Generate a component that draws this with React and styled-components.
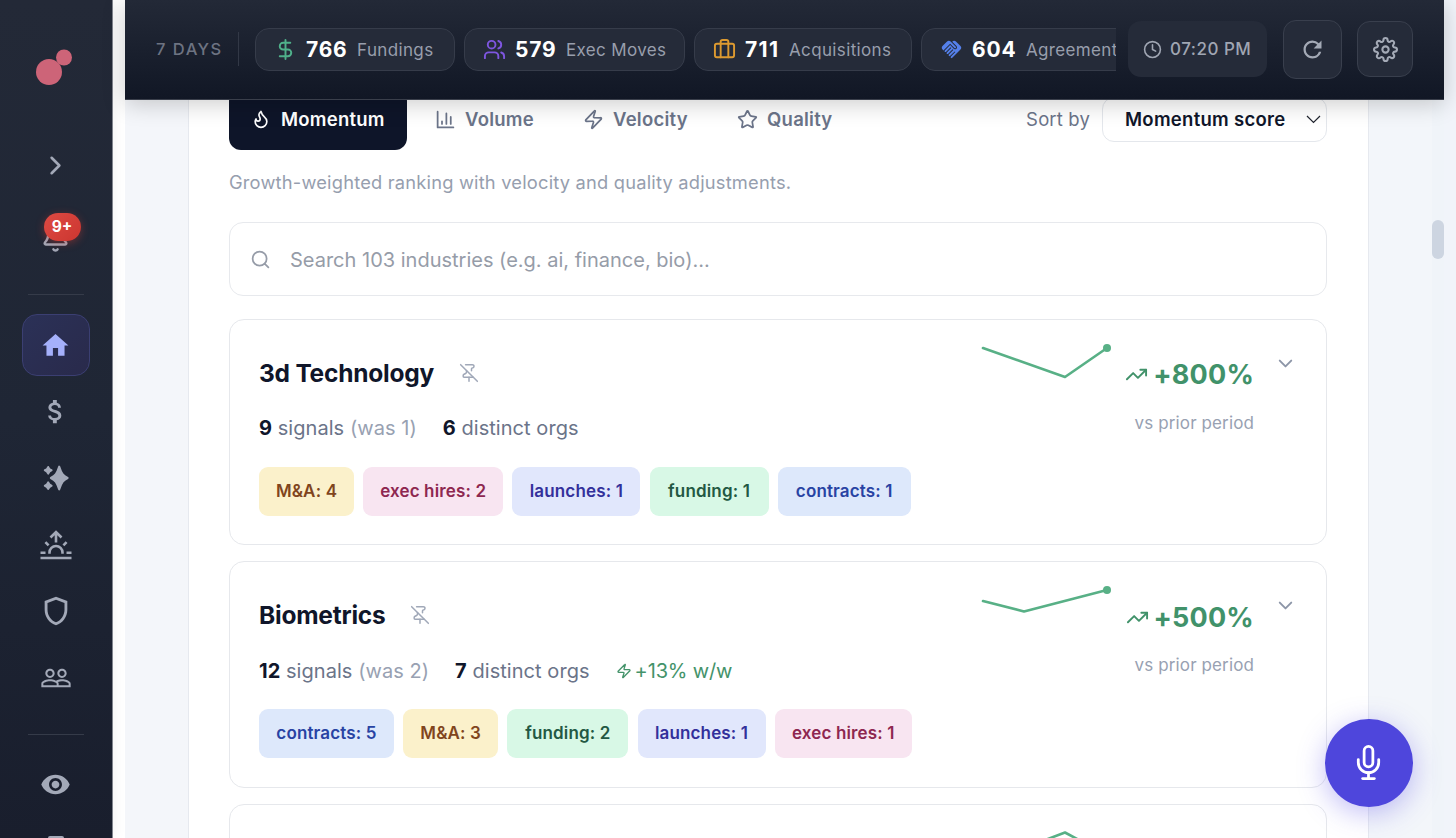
import React from 'react';
import styled, { createGlobalStyle } from 'styled-components';
import { Bell, ChevronDown, Clock, DollarSign, Users, Briefcase, Flame, Zap, Star, Search, PinOff, TrendingUp } from 'lucide-react';
import { FiChevronRight, FiMic, FiSettings } from 'react-icons/fi';
import { MdHome, MdAttachMoney, MdOutlineShield, MdPeopleOutline, MdRemoveRedEye, MdHandshake, MdRefresh } from 'react-icons/md';


const GlobalStyle = createGlobalStyle`
* {
    box-sizing: border-box;
}
body {
    margin: 0;
    overflow: hidden;
    background: white;
    font-family: Inter, "Liberation Sans", sans-serif;
    font-optical-sizing: none;
}
`;
const Container = styled.div`
width: 1456px;
height: 838px;
display: flex;
overflow: hidden;
background: white;
`;

/* sidebar */
const Sidebar = styled.nav`
width: 113px;
height: 838px;
flex: none;
display: flex;
flex-direction: column;
align-items: center;
padding-right: 1px;
overflow: hidden;
color: #a3a9b8;
background: linear-gradient(180deg, #232937 0%, #1f2635 50%, #191e2d 100%);
border-right: 1px solid #80848d;
box-shadow: 2px 0 12px rgba(0, 0, 0, 0.05);
`;
const Logo = styled.div`
height: 132px;
flex: none;
padding-top: 48px;
`;
const NavItem = styled.div`
position: relative;
width: 68px;
height: ${(p) => p.$height || 66.7}px;
flex: none;
display: flex;
align-items: center;
justify-content: center;
`;
const NavActive = styled(NavItem)`
height: 62px;
margin-bottom: 2px;
border-radius: 15px;
border: 1px solid #3b3f72;
color: #a5b0fb;
background: linear-gradient(135deg, #2b3157, #292a4b);
`;
const NavDivider = styled.div`
width: 56px;
height: 1px;
flex: none;
margin: ${(p) => p.$margin};
background: #353b49;
`;
const Badge = styled.span`
position: absolute;
left: 22px;
top: 14.5px;
width: 37px;
height: 28px;
border-radius: 14px;
display: flex;
align-items: center;
justify-content: center;
font-size: 15.5px;
font-weight: 700;
color: white;
background: linear-gradient(135deg, #df4a43, #cb3630);
box-shadow: 0 2px 9px rgba(220, 60, 50, 0.4);
`;

/* header */
const Main = styled.main`
width: 1319px;
height: 838px;
margin-left: 12px;
flex: none;
display: flex;
flex-direction: column;
`;
const Header = styled.header`
position: relative;
z-index: 2;
height: 100px;
flex: none;
display: flex;
align-items: center;
padding: 0 31px 1px;
background: linear-gradient(180deg, #232937, #111725);
border-bottom: 1px solid #3a3f4b;
box-shadow: 0 4px 22px rgba(0, 0, 0, 0.2);
`;
const Period = styled.span`
width: 83px;
height: 34px;
line-height: 34px;
flex: none;
font-size: 16.5px;
font-weight: 500;
letter-spacing: 1.5px;
color: #6d7382;
border-right: 1px solid #323846;
`;
const Stats = styled.div`
width: 876.5px;
flex: none;
display: flex;
gap: 9.5px;
margin: 0 12.5px 0 0;
padding-left: 16px;
overflow: hidden;
`;
const Stat = styled.div`
width: ${(p) => p.$width}px;
height: 43px;
flex: none;
display: flex;
align-items: center;
padding-left: 18px;
border: 1px solid #363c4a;
border-radius: 14px;
background: #252b39;
white-space: nowrap;
svg {
    color: ${(p) => p.$color};
    flex: none;
}
`;
const StatValue = styled.b`
margin-left: 9px;
font-size: 21px;
font-weight: 700;
letter-spacing: ${(p) => p.$spacing || 0.8}px;
color: white;
`;
const StatLabel = styled.span`
margin-left: 9.5px;
padding-top: 1px;
font-size: 17px;
letter-spacing: 0.36px;
color: #989eac;
`;
const Time = styled.div`
width: 139px;
height: 56px;
flex: none;
display: flex;
align-items: center;
gap: 8px;
padding-left: 15px;
border-radius: 13px;
font-size: 17px;
font-weight: 500;
letter-spacing: 0.5px;
white-space: nowrap;
color: #a0a6b3;
background: #252b39;
`;
const IconButton = styled.button`
width: ${(p) => p.$size}px;
height: ${(p) => p.$size}px;
flex: none;
display: flex;
align-items: center;
justify-content: center;
margin-left: 15.5px;
padding: 0;
border: 1px solid #393f4d;
border-radius: 13px;
color: #a4aab6;
background: #252b39;
`;

/* content */
const Content = styled.div`
display: flex;
height: 738px;
background: linear-gradient(90deg, #f4f6fa, #f3f6fa);
`;
const Panel = styled.section`
width: 1180.5px;
height: 738px;
flex: none;
margin-left: 63px;
padding: 0 40.5px 0 40px;
overflow: visible;
background: white;
border: 1px solid #e6e9ef;
border-width: 0 1px;
`;
const Toolbar = styled.div`
display: flex;
align-items: center;
height: 61px;
margin-top: -11px;
`;
const Tab = styled.div`
width: ${(p) => p.$width}px;
height: 61px;
flex: none;
display: flex;
align-items: center;
gap: ${(p) => (p.$active ? 10 : 9)}px;
padding-left: ${(p) => (p.$active ? 22 : 28)}px;
padding-bottom: 1px;
border-radius: 12px;
font-size: 18.5px;
font-weight: 600;
letter-spacing: 0.25px;
color: ${(p) => (p.$active ? 'white' : '#6b7489')};
background: ${(p) => (p.$active ? '#0e1529' : 'transparent')};
`;
const SortLabel = styled.span`
margin-left: auto;
margin-right: 12px;
padding-bottom: 1px;
font-size: 18.5px;
letter-spacing: 0.15px;
color: #6b7489;
`;
const Select = styled.div`
width: 225px;
height: 45px;
display: flex;
align-items: center;
justify-content: space-between;
padding: 0 5px 1px 22px;
border: 1px solid #e4e7ec;
border-radius: 12px;
font-size: 18.5px;
font-weight: 600;
letter-spacing: 0.28px;
color: #10162a;
`;
const Hint = styled.p`
margin: 20px 0 0;
line-height: 24px;
font-size: 18.3px;
letter-spacing: 0.2px;
color: #969eae;
`;
const SearchBox = styled.div`
height: 74px;
margin: 28px 0 22.5px;
display: flex;
align-items: center;
gap: 19px;
padding: 1px 0 0 20px;
border: 1px solid #e7e9ed;
border-radius: 14px;
font-size: 20px;
color: #969ca8;
`;
const CardList = styled.div`
display: flex;
flex-direction: column;
gap: 16px;
`;
const Card = styled.article`
height: 226.5px;
flex: none;
display: flex;
padding: 27px 29px 0 29px;
border: 1px solid #e6e8ec;
border-radius: 15px;
`;
const CardBody = styled.div`
flex: 1;
`;
const CardTitle = styled.h3`
margin: 0;
height: 52px;
display: flex;
align-items: center;
gap: 24.5px;
font-size: 24.5px;
font-weight: 700;
letter-spacing: -0.22px;
color: #10162a;
svg {
    color: #a0a8b8;
}
`;
const Meta = styled.div`
display: flex;
align-items: center;
gap: 26px;
height: 30px;
margin-top: 14.5px;
font-size: 20px;
letter-spacing: 0.05px;
color: #6b7489;
b {
    font-weight: 700;
    color: #10162a;
}
`;
const Was = styled.span`
color: #98a1b2;
`;
const Weekly = styled.span`
display: flex;
align-items: center;
gap: 3px;
letter-spacing: -0.15px;
color: #44936a;
`;
const Chips = styled.div`
display: flex;
gap: 9.2px;
margin-top: 23.5px;
`;
const chipColors = {
    amber: ['#fbf1cb', '#80451d'],
    pink: ['#f8e5f1', '#8e2750'],
    indigo: ['#e1e7fc', '#33309b'],
    green: ['#d8f8e6', '#235843'],
    blue: ['#dde8fb', '#2843a3'],
};
const Chip = styled.span`
width: ${(p) => p.$width}px;
height: 49px;
flex: none;
display: flex;
align-items: center;
justify-content: center;
padding-bottom: 0.5px;
border-radius: 9px;
font-size: 17px;
font-weight: 600;
letter-spacing: 0.15px;
white-space: nowrap;
background: ${(p) => chipColors[p.$tone][0]};
color: ${(p) => chipColors[p.$tone][1]};
`;
const Spark = styled.svg`
width: 134px;
height: 48px;
flex: none;
margin-top: -7px;
margin-right: -0.5px;
overflow: visible;
`;
const Delta = styled.div`
width: 140px;
flex: none;
display: flex;
flex-direction: column;
align-items: flex-end;
`;
const DeltaValue = styled.div`
display: flex;
align-items: center;
gap: 5px;
height: 56px;
font-size: 27px;
font-weight: 750;
letter-spacing: 0.2px;
color: #41926a;
`;
const DeltaNote = styled.span`
margin-top: 8px;
line-height: 24px;
font-size: 17px;
letter-spacing: 0.12px;
color: #98a1b2;
`;
const Expand = styled.span`
width: 23px;
margin: 5px 0 0 20px;
height: 24px;
color: #8d96a8;
`;
const Gutter = styled.div`
width: 12px;
height: 738px;
margin-left: auto;
padding-top: 120px;
background: #f0f4f9;
`;
const Thumb = styled.div`
width: 12px;
height: 39px;
border-radius: 6px;
background: #cdd5e1;
`;
const Edge = styled.div`
width: 12px;
flex: none;
background: #f1f4fa;
`;
const MicButton = styled.button`
position: fixed;
z-index: 3;
left: 1325px;
top: 719px;
width: 87.5px;
height: 87.5px;
display: flex;
align-items: center;
justify-content: center;
padding: 0;
border: none;
border-radius: 50%;
color: white;
background: #4e46dc;
box-shadow: 0 6px 28px rgba(79, 70, 229, 0.36);
`;

const SparklesIcon = () => (
    <svg width="26" height="26" viewBox="0 0 26 26" fill="currentColor" stroke="currentColor" strokeWidth="2" strokeLinejoin="round">
        <path d="M16.200 1.600C18.600 9 20 10.600 24.600 13C20 15.400 18.600 17 16.200 24.400C13.800 17 12.400 15.400 7.800 13C12.400 10.600 13.800 9 16.200 1.600Z" />
        <path d="M5.200 2C6.100 4.300 6.500 4.700 8.600 5.300C6.500 5.900 6.100 6.300 5.200 8.600C4.300 6.300 3.900 5.900 1.800 5.300C3.900 4.700 4.300 4.300 5.200 2Z" />
        <path d="M5.200 17.400C6.100 19.700 6.500 20.100 8.600 20.700C6.500 21.300 6.100 21.700 5.200 24C4.300 21.700 3.900 21.300 1.800 20.700C3.900 20.100 4.300 19.700 5.200 17.400Z" />
    </svg>
);
const SunriseIcon = () => (
    <svg width="32" height="30" viewBox="0 0 32 30" fill="none" stroke="currentColor" strokeWidth="2.600">
        <path d="M0.500 28H31.500M0.500 22.800H5.500M26.500 22.800H31.500M5.400 12.200L8.600 15.400M26.600 12.200L23.400 15.400" />
        <path d="M9.500 23.800V22.500A6.500 6.500 0 0 1 22.500 22.500V23.800M16 12.500V2.500M10.500 7.500L16 2L21.500 7.500" />
    </svg>
);
const ChartIcon = () => (
    <svg width="21" height="21" viewBox="0 0 24 24" fill="none" stroke="currentColor" strokeWidth="2" strokeLinecap="round" strokeLinejoin="round">
        <path d="M3 3v18h18M18 17V9M13 17V5M8 17v-3" />
    </svg>
);
const SelectArrow = () => (
    <svg width="15" height="9" viewBox="0 0 15 9" fill="none" stroke="#20242e" strokeWidth="1.2">
        <path d="M1 1L7.500 7.500L14 1" />
    </svg>
);

const stats = [
    { value: '766', label: 'Fundings', icon: DollarSign, color: '#4fb08a', width: 199.5 },
    { value: '579', label: 'Exec Moves', icon: Users, color: '#7e56e0', width: 220.5 },
    { value: '711', label: 'Acquisitions', icon: Briefcase, color: '#dd9a30', width: 217.5, spacing: 1.4 },
    { value: '604', label: 'Agreements', icon: MdHandshake, color: '#5580ea', width: 216 },
];

const industries = [
    {
        name: '3d Technology', signals: 9, was: 1, orgs: 6, delta: '+800%',
        points: '2,8 84,37 126,8', dot: [126, 8],
        chips: [['M&A: 4', 'amber', 95], ['exec hires: 2', 'pink', 140], ['launches: 1', 'indigo', 128], ['funding: 1', 'green', 119], ['contracts: 1', 'blue', 133]],
    },
    {
        name: 'Biometrics', signals: 12, was: 2, orgs: 7, delta: '+500%', weekly: '+13% w/w',
        points: '2,19 43,29.5 126,8', dot: [126, 8],
        chips: [['contracts: 5', 'blue', 135], ['M&A: 3', 'amber', 95], ['funding: 2', 'green', 121], ['launches: 1', 'indigo', 128], ['exec hires: 1', 'pink', 137]],
    },
];

const IndustryCard = ({ item }) => (
    <Card>
        <CardBody>
            <CardTitle>{item.name}<PinOff size={20} strokeWidth={1.8} /></CardTitle>
            <Meta>
                <span><b>{item.signals}</b> signals <Was>(was {item.was})</Was></span>
                <span><b>{item.orgs}</b> distinct orgs</span>
                {item.weekly && <Weekly><Zap size={16} />{item.weekly}</Weekly>}
            </Meta>
            <Chips>
                {item.chips.map(([text, tone, width]) => (
                    <Chip key={text} $tone={tone} $width={width}>{text}</Chip>
                ))}
            </Chips>
        </CardBody>
        <Spark viewBox="0 0 134 48">
            <polyline points={item.points} fill="none" stroke="#58b086" strokeWidth="2.600" strokeLinejoin="round" strokeLinecap="round" />
            <circle cx={item.dot[0]} cy={item.dot[1]} r="4" fill="#58b086" />
        </Spark>
        <Delta>
            <DeltaValue><TrendingUp size={23} />{item.delta}</DeltaValue>
            <DeltaNote>vs prior period</DeltaNote>
        </Delta>
        <Expand><ChevronDown size={23} /></Expand>
    </Card>
);

const App = () => {
    return (
        <Container>
            <GlobalStyle />
            <Sidebar>
                <Logo>
                    <svg width="40" height="40" viewBox="0 0 40 40" fill="#cd6478">
                        <circle cx="13" cy="24" r="13" />
                        <circle cx="28" cy="9.500" r="8" />
                    </svg>
                </Logo>
                <NavItem $height={66}><FiChevronRight size={31} /></NavItem>
                <NavItem $height={80}>
                    <Bell size={29} strokeWidth={2} />
                    <Badge>9+</Badge>
                </NavItem>
                <NavDivider $margin="16px 0 19px" />
                <NavActive><MdHome size={31} /></NavActive>
                <NavItem><MdAttachMoney size={31} /></NavItem>
                <NavItem><SparklesIcon /></NavItem>
                <NavItem><SunriseIcon /></NavItem>
                <NavItem><MdOutlineShield size={34} /></NavItem>
                <NavItem><MdPeopleOutline size={32} /></NavItem>
                <NavDivider $margin="22.5px 0 16.5px" />
                <NavItem><MdRemoveRedEye size={31} /></NavItem>
                <NavItem $height={62}>
                    <svg width="16" height="26" viewBox="0 0 16 26" fill="currentColor"><rect width="16" height="26" rx="2" /></svg>
                </NavItem>
            </Sidebar>
            <Main>
                <Header>
                    <Period>7 DAYS</Period>
                    <Stats>
                        {stats.map(({ icon: Icon, ...s }) => (
                            <Stat key={s.label} $width={s.width} $color={s.color}>
                                <Icon size={23} />
                                <StatValue $spacing={s.spacing}>{s.value}</StatValue>
                                <StatLabel>{s.label}</StatLabel>
                            </Stat>
                        ))}
                    </Stats>
                    <Time><Clock size={19} />07:20 PM</Time>
                    <IconButton $size={59}><MdRefresh size={27} /></IconButton>
                    <IconButton $size={56}><FiSettings size={25} strokeWidth={2} /></IconButton>
                </Header>
                <Content>
                    <Panel>
                        <Toolbar>
                            <Tab $active $width={178}><Flame size={20} />Momentum</Tab>
                            <Tab $width={148}><ChartIcon />Volume</Tab>
                            <Tab $width={154}><Zap size={21} />Velocity</Tab>
                            <Tab $width={150}><Star size={21} />Quality</Tab>
                            <SortLabel>Sort by</SortLabel>
                            <Select>Momentum score<SelectArrow /></Select>
                        </Toolbar>
                        <Hint>Growth-weighted ranking with velocity and quality adjustments.</Hint>
                        <SearchBox><Search size={21} />Search 103 industries (e.g. ai, finance, bio)...</SearchBox>
                        <CardList>
                            {industries.map((item) => <IndustryCard key={item.name} item={item} />)}
                            <Card>
                                <CardBody />
                                <Spark viewBox="0 0 134 48">
                                    <polyline points="2,37 43,23 84,7.5 126,30" fill="none" stroke="#58b086" strokeWidth="2.600" strokeLinejoin="round" />
                                </Spark>
                                <Delta />
                                <Expand />
                            </Card>
                        </CardList>
                    </Panel>
                    <Gutter><Thumb /></Gutter>
                </Content>
            </Main>
            <Edge />
            <MicButton><FiMic size={35} strokeWidth={1.9} /></MicButton>
        </Container>
    )
}

export default App
